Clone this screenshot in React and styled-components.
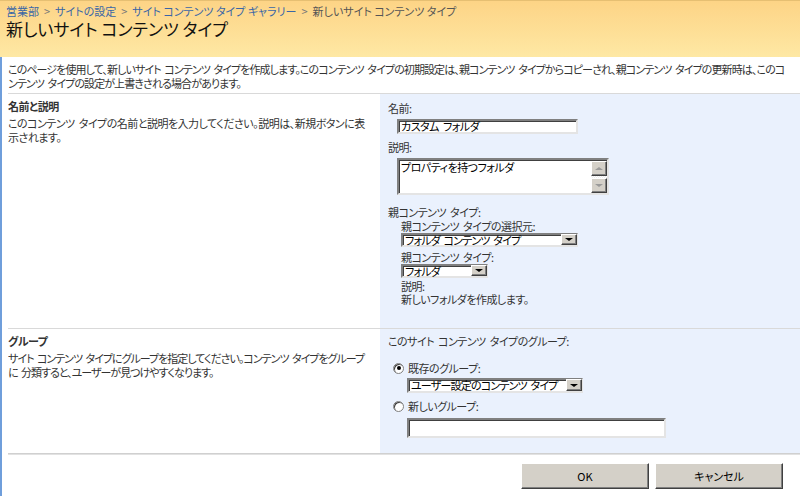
import styled, { createGlobalStyle } from "styled-components";

const GlobalStyle = createGlobalStyle`
  body {
    margin: 0;
    background: #fff;
    font-family: "Noto Sans CJK JP", "Liberation Sans", sans-serif;
    font-size: 11px;
    font-feature-settings: "palt";
    letter-spacing: -0.5px;
    word-spacing: 2px;
    color: #333;
  }
`;

const Page = styled.div`
  width: 800px;
  height: 496px;
  overflow: hidden;
  display: flex;
  flex-direction: column;
`;

const Header = styled.div`
  height: 57px;
  box-sizing: border-box;
  padding: 3px 0 0 6px;
  border-top: 1px solid #e6bf72;
  background: linear-gradient(#fdd486, #fee8a4);
`;

const Crumbs = styled.div`
  line-height: 14px;
  font-size: 11px;
  letter-spacing: 0;
  word-spacing: 0;
  white-space: nowrap;
  color: #555;
`;

const Crumb = styled.a`
  color: #3a66a6;
  text-decoration: none;
`;

const Sep = styled.span`
  color: #777;
  margin: 0 5px;
`;

const Title = styled.h1`
  margin: 2px 0 0 0;
  font-size: 17px;
  font-weight: normal;
  letter-spacing: 0;
  word-spacing: 0;
  line-height: 18px;
  color: #111;
  white-space: nowrap;
`;

const Main = styled.div`
  flex: 1;
  border-left: 2px solid #6f9edb;
  padding-left: 6px;
  display: flex;
  flex-direction: column;
`;

const Intro = styled.div`
  padding: 5px 0 3px 0;
  line-height: 14px;
  letter-spacing: -0.9px;
  white-space: nowrap;
  overflow: hidden;
`;

const Section = styled.div`
  display: grid;
  grid-template-columns: 372px 1fr;
  border-top: 1px solid #d9d9d9;
`;

const SectionInfo = styled.div`
  padding: 5px 0 0 0;
  overflow: hidden;
`;

const SectionTitle = styled.div`
  font-weight: bold;
  line-height: 14px;
  color: #333;
`;

const SectionText = styled.div`
  margin-top: 3px;
  line-height: 14px;
  letter-spacing: ${(p) => p.$ls}px;
  white-space: nowrap;
`;

const SectionBody = styled.div`
  background: #eaf1fd;
  padding: ${(p) => p.$top}px 0 ${(p) => p.$bottom}px 8px;
  display: flex;
  flex-direction: column;
  align-items: flex-start;
`;

const Label = styled.div`
  line-height: ${(p) => p.$lh || 14}px;
  margin-top: ${(p) => p.$mt || 0}px;
  white-space: nowrap;
`;

const Indent = styled.div`
  margin-left: ${(p) => p.$left}px;
  display: flex;
  flex-direction: column;
  align-items: flex-start;
`;

const inset = `
  box-sizing: border-box;
  background: #fff;
  border-style: solid;
  border-width: 2px;
  border-color: #808080 #e4e4e4 #e4e4e4 #808080;
  box-shadow: inset 1px 1px 0 #404040;
`;

const TextBox = styled.div`
  ${inset}
  width: ${(p) => p.$w}px;
  height: ${(p) => p.$h}px;
  margin-top: ${(p) => p.$mt || 0}px;
  margin-left: ${(p) => p.$ml || 0}px;
  padding: 0 2px;
  line-height: ${(p) => p.$h - 4}px;
  color: #000;
  white-space: nowrap;
`;

const Area = styled.div`
  ${inset}
  width: 212px;
  height: 37px;
  margin-top: 4px;
  margin-left: 9px;
  display: flex;
`;

const AreaText = styled.div`
  flex: 1;
  padding: 0 2px;
  line-height: 14px;
  color: #000;
`;

const ScrollBar = styled.div`
  width: 16px;
  display: flex;
  flex-direction: column;
  margin-top: 1px;
  background: repeating-conic-gradient(#eeeeee 0 25%, #ffffff 0 50%) 0 0 / 2px 2px;
`;

const Track = styled.div`
  flex: 1;
`;

const BevelButton = styled.div`
  box-sizing: border-box;
  background: #d4d0c8;
  border-style: solid;
  border-width: 1px;
  border-color: #ffffff #404040 #404040 #ffffff;
  box-shadow: inset -1px -1px 0 #808080;
  display: flex;
  align-items: center;
  justify-content: center;
`;

const ScrollBtn = styled(BevelButton)`
  width: 16px;
  height: 15px;
`;

const Arrow = styled.span`
  width: 0;
  height: 0;
  border-left: ${(p) => p.$size}px solid transparent;
  border-right: ${(p) => p.$size}px solid transparent;
  ${(p) => (p.$up ? "border-bottom" : "border-top")}: ${(p) => p.$size - 1}px solid ${(p) => p.$color};
`;

const Select = styled.div`
  ${inset}
  width: ${(p) => p.$w}px;
  height: ${(p) => p.$h}px;
  margin-top: ${(p) => p.$mt || 0}px;
  margin-left: ${(p) => p.$ml || 0}px;
  display: flex;
`;

const SelectText = styled.div`
  flex: 1;
  min-width: 0;
  padding: 0 2px;
  line-height: ${(p) => p.$lh}px;
  letter-spacing: -0.8px;
  color: #000;
  white-space: nowrap;
`;

const DropBtn = styled(BevelButton)`
  width: 16px;
  flex: none;
  margin: -1px -1px 0 0;
`;

const RadioRow = styled.label`
  display: flex;
  align-items: center;
  gap: 4px;
  height: 14px;
  margin-top: ${(p) => p.$mt}px;
  margin-left: 5px;
`;

const Radio = styled.span`
  box-sizing: border-box;
  width: 11px;
  height: 11px;
  border-radius: 50%;
  background: #fff;
  border: 1px solid #808080;
  box-shadow: inset 1px 1px 0 #404040;
  display: flex;
  align-items: center;
  justify-content: center;
  &::after {
    content: "";
    width: 4px;
    height: 4px;
    border-radius: 50%;
    background: ${(p) => (p.$on ? "#000" : "transparent")};
  }
`;

const BottomLine = styled.div`
  border-top: 1px solid #d0d0d0;
  border-bottom: 1px solid #e2e2e2;
`;

const Buttons = styled.div`
  display: flex;
  justify-content: flex-end;
  gap: 6px;
  padding: 8px 17px 0 0;
`;

const PushButton = styled(BevelButton)`
  width: 128px;
  height: 26px;
  font-size: 11px;
  letter-spacing: 0;
  color: #000;
  font-family: inherit;
`;

const Dropdown = ({ w, h, mt, ml, children }) => (
  <Select $w={w} $h={h} $mt={mt} $ml={ml}>
    <SelectText $lh={h - 4}>{children}</SelectText>
    <DropBtn>
      <Arrow $size={4} $color="#000" />
    </DropBtn>
  </Select>
);

export default function App() {
  return (
    <Page>
      <GlobalStyle />
      <Header>
        <Crumbs>
          <Crumb href="#">営業部</Crumb>
          <Sep>&gt;</Sep>
          <Crumb href="#">サイトの設定</Crumb>
          <Sep>&gt;</Sep>
          <Crumb href="#">サイト コンテンツ タイプ ギャラリー</Crumb>
          <Sep>&gt;</Sep>
          新しいサイト コンテンツ タイプ
        </Crumbs>
        <Title>新しいサイト コンテンツ タイプ</Title>
      </Header>
      <Main>
        <Intro>
          このページを使用して、新しいサイト コンテンツ タイプを作成します。このコンテンツ タイプの初期設定は、親コンテンツ タイプからコピーされ、親コンテンツ タイプの更新時は、このコ
          <br />
          ンテンツ タイプの設定が上書きされる場合があります。
        </Intro>

        <Section>
          <SectionInfo>
            <SectionTitle>名前と説明</SectionTitle>
            <SectionText $ls={-0.5}>
              このコンテンツ タイプの名前と説明を入力してください。説明は、新規ボタンに表
              <br />
              示されます。
            </SectionText>
          </SectionInfo>
          <SectionBody $top={7} $bottom={22}>
            <Label>名前:</Label>
            <TextBox $w={181} $h={15} $mt={4} $ml={9}>
              カスタム フォルダ
            </TextBox>
            <Label $mt={6}>説明:</Label>
            <Area>
              <AreaText>プロパティを持つフォルダ</AreaText>
              <ScrollBar>
                <ScrollBtn>
                  <Arrow $up $size={4} $color="#9a9a9a" />
                </ScrollBtn>
                <Track />
                <ScrollBtn>
                  <Arrow $size={4} $color="#9a9a9a" />
                </ScrollBtn>
              </ScrollBar>
            </Area>
            <Label $mt={10}>親コンテンツ タイプ:</Label>
            <Indent $left={13}>
              <Label>親コンテンツ タイプの選択元:</Label>
              <Dropdown w={177} h={14}>
                フォルダ コンテンツ タイプ
              </Dropdown>
              <Label $mt={3}>親コンテンツ タイプ:</Label>
              <Dropdown w={87} h={14}>
                フォルダ
              </Dropdown>
              <Label $mt={2} $lh={13}>
                説明:
              </Label>
              <Label $lh={13}>新しいフォルダを作成します。</Label>
            </Indent>
          </SectionBody>
        </Section>

        <Section>
          <SectionInfo>
            <SectionTitle>グループ</SectionTitle>
            <SectionText $ls={-1}>
              サイト コンテンツ タイプにグループを指定してください。コンテンツ タイプをグループ
              <br />
              に 分類すると、ユーザーが見つけやすくなります。
            </SectionText>
          </SectionInfo>
          <SectionBody $top={5} $bottom={15}>
            <Label>このサイト コンテンツ タイプのグループ:</Label>
            <RadioRow $mt={13}>
              <Radio $on />
              既存のグループ:
            </RadioRow>
            <Dropdown w={176} h={15} mt={3} ml={19}>
              ユーザー設定のコンテンツ タイプ
            </Dropdown>
            <RadioRow $mt={6}>
              <Radio />
              新しいグループ:
            </RadioRow>
            <TextBox $w={259} $h={20} $mt={5} $ml={19} />
          </SectionBody>
        </Section>

        <BottomLine />
        <Buttons>
          <PushButton>OK</PushButton>
          <PushButton>キャンセル</PushButton>
        </Buttons>
      </Main>
    </Page>
  );
}
